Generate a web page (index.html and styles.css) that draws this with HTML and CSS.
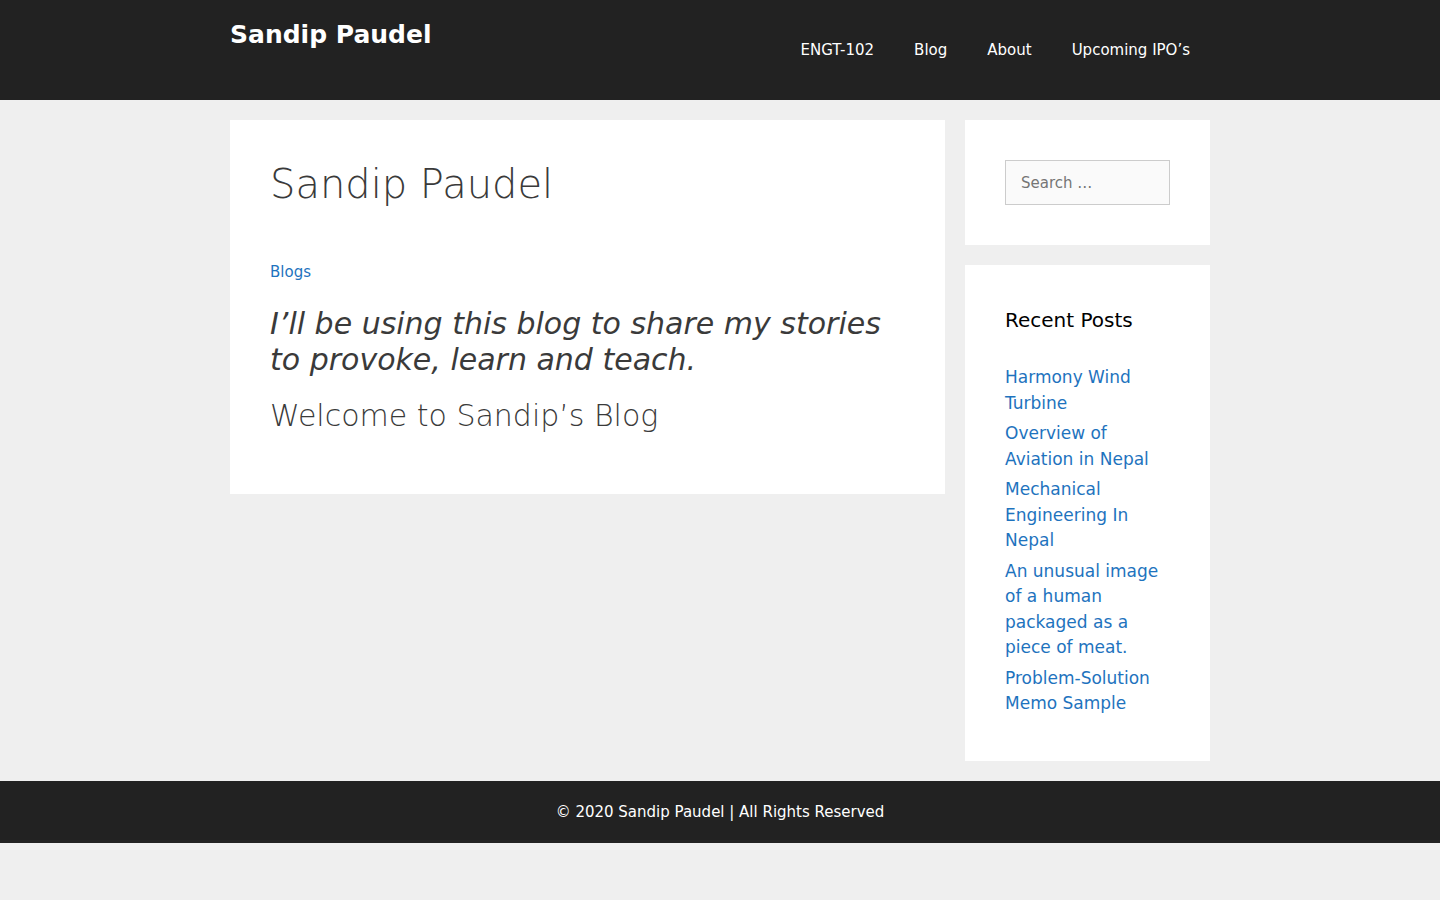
FILE: index.html
```html
<!DOCTYPE html>
<html lang="en">
<head>
<meta charset="utf-8">
<title>Sandip Paudel</title>
<link rel="stylesheet" href="styles.css">
</head>
<body>
<header class="site-header">
  <div class="inside-header">
    <p class="site-title"><a href="#">Sandip Paudel</a></p>
    <nav class="main-nav">
      <ul>
        <li><a href="#">ENGT-102</a></li>
        <li><a href="#">Blog</a></li>
        <li><a href="#">About</a></li>
        <li><a href="#">Upcoming IPO’s</a></li>
      </ul>
    </nav>
  </div>
</header>

<div class="site-content">
  <main class="content-area">
    <article class="inside-article">
      <h1 class="entry-title">Sandip Paudel</h1>
      <div class="entry-content">
        <p class="cat-link"><a href="#">Blogs</a></p>
        <p class="lead">I’ll be using this blog to share my stories to provoke, learn and teach.</p>
        <h2 class="welcome">Welcome to Sandip’s Blog</h2>
      </div>
    </article>
  </main>

  <aside class="sidebar">
    <section class="widget widget-search">
      <input class="search-field" type="search" placeholder="Search …">
    </section>
    <section class="widget">
      <h2 class="widget-title">Recent Posts</h2>
      <ul class="post-list">
        <li><a href="#">Harmony Wind Turbine</a></li>
        <li><a href="#">Overview of Aviation in Nepal</a></li>
        <li><a href="#">Mechanical Engineering In Nepal</a></li>
        <li><a href="#">An unusual image of a human packaged as a piece of meat.</a></li>
        <li><a href="#">Problem-Solution Memo Sample</a></li>
      </ul>
    </section>
  </aside>
</div>

<footer class="site-footer">
  <span>© 2020 Sandip Paudel | All Rights Reserved</span>
</footer>
</body>
</html>
```

FILE: styles.css
```css
* { box-sizing: border-box; }

html, body {
  margin: 0;
  padding: 0;
}

body {
  background: #efefef;
  color: #3a3a3a;
  font-family: "DejaVu Sans", Verdana, sans-serif;
  font-size: 17px;
  line-height: 1.5;
}

a { color: #1e73be; text-decoration: none; }

/* Header */
.site-header {
  background: #222222;
  color: #ffffff;
}

.inside-header {
  width: 980px;
  margin: 0 auto;
  padding: 20px 0;
  display: flex;
  justify-content: space-between;
  align-items: flex-start;
}

.site-title {
  margin: 0;
  font-size: 25px;
  font-weight: 700;
  line-height: 30px;
}

.site-title a { color: #ffffff; }

.main-nav ul {
  list-style: none;
  margin: 0;
  padding: 0;
  display: flex;
}

.main-nav a {
  display: block;
  padding: 0 20px;
  line-height: 60px;
  font-size: 15px;
  color: #ffffff;
}

/* Content */
.site-content {
  width: 980px;
  margin: 20px auto 0;
  display: flex;
  align-items: flex-start;
  gap: 20px;
}

.content-area {
  width: 715px;
  flex: none;
}

.inside-article {
  background: #ffffff;
  padding: 40px;
}

.entry-title {
  margin: 0;
  font-size: 40px;
  font-weight: 300;
  line-height: 1.2;
  color: #3a3a3a;
}

.entry-content {
  margin-top: 53px;
}

.cat-link {
  margin: 0 0 22px;
  font-size: 15px;
  line-height: 22.5px;
}

.lead {
  margin: 0 0 20px;
  font-size: 30px;
  font-style: italic;
  line-height: 1.2;
}

.welcome {
  margin: 0 0 20px;
  font-size: 30px;
  font-weight: 300;
  line-height: 1.2;
}

/* Sidebar */
.sidebar {
  width: 245px;
  flex: none;
}

.widget {
  background: #ffffff;
  padding: 40px;
  margin-bottom: 20px;
}

.search-field {
  display: block;
  width: 100%;
  height: 45px;
  padding: 10px 15px;
  border: 1px solid #cccccc;
  border-radius: 0;
  background: #fafafa;
  color: #666666;
  font-family: "DejaVu Sans", Verdana, sans-serif;
  font-size: 15px;
  line-height: 23px;
  outline: none;
}

.search-field::placeholder { color: #757575; }

.widget-title {
  margin: 0 0 30px;
  font-size: 20px;
  font-weight: 400;
  line-height: 1.5;
  color: #000000;
}

.post-list {
  list-style: none;
  margin: 0;
  padding: 0;
}

.post-list li {
  padding-bottom: 5px;
}

.post-list li:last-child {
  padding-bottom: 4px;
}

/* Footer */
.site-footer {
  background: #222222;
  color: #ffffff;
  text-align: center;
  padding: 20px;
  font-size: 15px;
  line-height: 1.5;
}
```
